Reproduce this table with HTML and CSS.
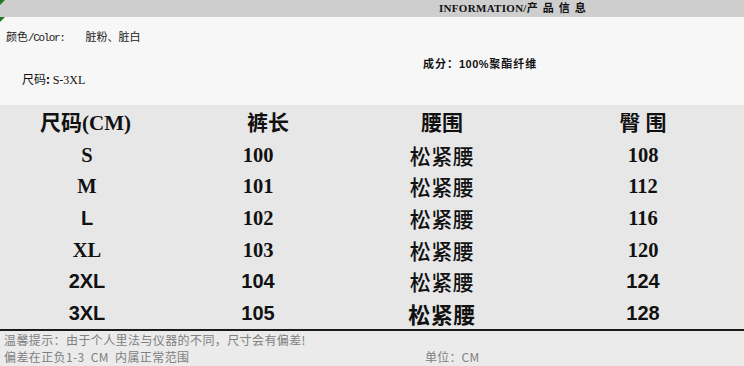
FILE: index.html
```html
<!DOCTYPE html>
<html lang="zh">
<head>
<meta charset="utf-8">
<title>INFORMATION</title>
<link rel="stylesheet" href="styles.css">
</head>
<body>
<div class="page">
  <header class="topbar">
    <span class="mark"></span>
    <span class="title">INFORMATION/<span class="title-cn">产品信息</span></span>
  </header>
  <section class="info">
    <span class="mark"></span>
    <div class="color-line"><span class="cn">颜色</span><span class="mono">/Color:</span><span class="val">脏粉、脏白</span></div>
    <div class="comp">成分：<span class="num">100%</span>聚酯纤维</div>
    <div class="size-line"><span class="cn">尺码</span><b>:</b> <span class="serif">S-3XL</span></div>
  </section>
  <section class="table">
    <div class="row head">
      <div class="c1">尺码(CM)</div>
      <div class="c2">裤长</div>
      <div class="c3">腰围</div>
      <div class="c4">臀 围</div>
    </div>
    <div class="row serif-row">
      <div class="c1">S</div><div class="c2">100</div><div class="c3 cjk">松紧腰</div><div class="c4">108</div>
    </div>
    <div class="row serif-row">
      <div class="c1">M</div><div class="c2">101</div><div class="c3 cjk">松紧腰</div><div class="c4">112</div>
    </div>
    <div class="row serif-row">
      <div class="c1 sans">L</div><div class="c2">102</div><div class="c3 cjk">松紧腰</div><div class="c4">116</div>
    </div>
    <div class="row serif-row">
      <div class="c1">XL</div><div class="c2">103</div><div class="c3 cjk">松紧腰</div><div class="c4">120</div>
    </div>
    <div class="row sans-row">
      <div class="c1">2XL</div><div class="c2">104</div><div class="c3 cjk">松紧腰</div><div class="c4">124</div>
    </div>
    <div class="row sans-row">
      <div class="c1">3XL</div><div class="c2">105</div><div class="c3 cjk heavy">松紧腰</div><div class="c4">128</div>
    </div>
  </section>
  <footer class="foot">
    <div class="note">温馨提示：由于个人里法与仪器的不同，尺寸会有偏差!</div>
    <div class="note2"><span class="dev">偏差在正负1-3 CM 内属正常范围</span><span class="unit">单位：CM</span></div>
  </footer>
</div>
</body>
</html>
```
FILE: styles.css
```css
html, body {
  margin: 0;
  padding: 0;
}
body {
  width: 744px;
  height: 366px;
  overflow: hidden;
  background: #e9e9e9;
  font-family: "Liberation Serif", "Noto Sans CJK SC", serif;
  color: #111;
}
.page {
  display: flex;
  flex-direction: column;
}
.mark {
  position: absolute;
  left: 0;
  top: 0;
  width: 0;
  height: 0;
  border-top: 5px solid #1f7a1f;
  border-right: 5px solid transparent;
}
.topbar {
  position: relative;
  height: 17px;
  background: #cecece;
  display: flex;
  align-items: center;
  padding-left: 439px;
  box-sizing: border-box;
}
.title {
  font-family: "Liberation Serif", "Noto Sans CJK SC", serif;
  font-weight: 700;
  font-size: 11px;
  line-height: 17px;
  color: #111;
  letter-spacing: 0.3px;
}
.title-cn {
  letter-spacing: 5px;
}
.info {
  position: relative;
  height: 88px;
  background: #f7f7f7;
  box-sizing: border-box;
  padding-top: 12px;
  font-size: 11px;
  color: #222;
}
.color-line {
  display: flex;
  align-items: baseline;
  height: 14px;
  line-height: 14px;
  padding-left: 6px;
  font-family: "Noto Sans CJK SC", sans-serif;
}
.mono {
  font-family: "Liberation Mono", monospace;
  font-size: 11px;
  letter-spacing: -1.4px;
}
.val {
  margin-left: 21px;
}
.comp {
  margin-top: 13px;
  height: 14px;
  line-height: 14px;
  padding-left: 423px;
  font-family: "Noto Sans CJK SC", sans-serif;
  font-weight: 700;
  font-size: 11px;
  letter-spacing: 1px;
  color: #111;
}
.comp .num {
  font-family: "Liberation Sans", sans-serif;
  font-weight: 700;
  letter-spacing: 0.5px;
}
.size-line {
  margin-top: 2px;
  height: 14px;
  line-height: 14px;
  padding-left: 22px;
  font-size: 12px;
  color: #111;
  font-family: "Noto Sans CJK SC", sans-serif;
}
.size-line .serif {
  font-family: "Liberation Serif", serif;
  font-size: 12px;
}
.table {
  background: #e7e7e7;
  padding-top: 2px;
  border-bottom: 2px solid #1a1a1a;
}
.row {
  display: grid;
  grid-template-columns: 174px 176px 184px 1fr;
  align-items: center;
  text-align: center;
  height: 31.6px;
  font-weight: 700;
  font-size: 20px;
  line-height: 24px;
  color: #111;
}
.row.head {
  height: 32px;
  font-size: 21px;
  font-family: "Liberation Serif", "Noto Sans CJK SC", serif;
}
.row.head .c1 {
  padding-right: 3px;
}
.row.head .c2 {
  padding-left: 12px;
}
.row .c2 {
  padding-right: 8px;
}
.row.head .c2 {
  padding-right: 0;
}
.row .c4 {
  padding-left: 8px;
}
.serif-row {
  font-family: "Liberation Serif", serif;
  font-size: 20.5px;
}
.sans-row {
  font-family: "Liberation Sans", sans-serif;
  font-size: 20px;
}
.sans {
  font-family: "Liberation Sans", sans-serif;
  font-size: 20px;
}
.cjk {
  font-family: "Noto Sans CJK SC", sans-serif;
  font-weight: 500;
  font-size: 21px;
  letter-spacing: 0.5px;
}
.cjk.heavy {
  font-weight: 700;
  font-size: 22px;
}
.foot {
  height: 35px;
  background: #ebebeb;
  color: #808080;
  font-family: "Noto Sans CJK SC", sans-serif;
  font-size: 12px;
  line-height: 17px;
  padding-left: 4px;
  letter-spacing: 0.4px;
}
.note2 {
  display: flex;
}
.dev {
  width: 421px;
  word-spacing: 3px;
}
.unit {
  letter-spacing: 0.2px;
}
```
